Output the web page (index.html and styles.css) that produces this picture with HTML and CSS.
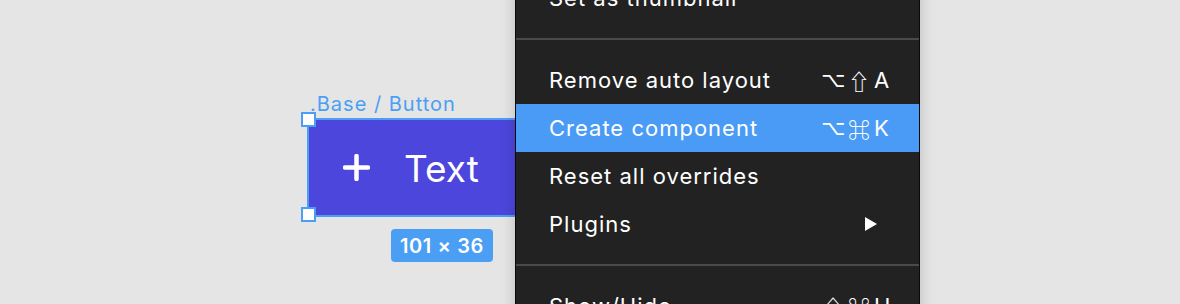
FILE: index.html
```html
<!DOCTYPE html>
<html>
<head>
<meta charset="utf-8">
<link rel="stylesheet" href="styles.css">
</head>
<body>
<div class="canvas">
  <div class="frame-label">.Base / Button</div>
  <div class="button">
    <svg class="plus" width="27" height="27" viewBox="0 0 27 27"><path d="M13.5 2v23M2 13.5h23" stroke="#fff" stroke-width="4.5" stroke-linecap="round"/></svg>
    <span class="btn-text">Text</span>
    <svg class="chev" width="16" height="10" viewBox="0 0 16 10"><path d="M2 2l6 6 6-6" stroke="#fff" stroke-width="2.5" fill="none" stroke-linecap="round"/></svg>
  </div>
  <span class="handle handle-tl"></span>
  <span class="handle handle-bl"></span>
  <div class="size-badge">101 × 36</div>

  <div class="menu">
    <div class="item">Set as thumbnail</div>
    <div class="sep"></div>
    <div class="item"><span>Remove auto layout</span><span class="keys"><span class="k1">⌥</span><span class="k2">⇧</span><span class="kl">A</span></span></div>
    <div class="item active"><span>Create component</span><span class="keys"><span class="k1">⌥</span><span class="k2">⌘</span><span class="kl">K</span></span></div>
    <div class="item"><span>Reset all overrides</span></div>
    <div class="item"><span>Plugins</span><svg class="tri" width="12" height="14" viewBox="0 0 12 14"><path d="M0 0L12 7L0 14Z" fill="#fff"/></svg></div>
    <div class="sep"></div>
    <div class="item"><span>Show/Hide</span><span class="keys"><span class="k2">⇧</span><span class="k2">⌘</span><span class="kl">H</span></span></div>
  </div>
</div>
</body>
</html>
```
FILE: styles.css
```css
html, body {
  margin: 0;
  padding: 0;
  background: #e5e5e5;
  font-family: Inter, "Noto Sans", "DejaVu Sans", sans-serif;
}
.canvas {
  position: relative;
  width: 1180px;
  height: 304px;
  overflow: hidden;
}
.frame-label {
  position: absolute;
  left: 310px;
  top: 94px;
  font-size: 20px;
  line-height: 20px;
  letter-spacing: 1px;
  color: #4a9ff5;
}
.button {
  position: absolute;
  left: 307px;
  top: 118px;
  width: 240px;
  height: 99px;
  box-sizing: border-box;
  border: 2px solid #4a9ff5;
  background: #4d46dc;
  display: flex;
  align-items: center;
  padding-left: 34px;
  gap: 34px;
}
.plus { flex: none; }
.btn-text {
  color: #fff;
  font-size: 37px;
  margin-right: 35px;
  margin-top: 1px;
}
.chev { flex: none; margin-top: -6px; }
.handle {
  position: absolute;
  left: 301px;
  width: 15px;
  height: 15px;
  box-sizing: border-box;
  background: #fff;
  border: 2px solid #4a9ff5;
}
.handle-tl { top: 112px; }
.handle-bl { top: 207px; }
.size-badge {
  position: absolute;
  left: 391px;
  top: 229px;
  width: 102px;
  height: 33px;
  border-radius: 4px;
  background: #4a9ff5;
  color: #fff;
  font-size: 20px;
  font-weight: 600;
  letter-spacing: 0.6px;
  display: flex;
  align-items: center;
  justify-content: center;
}
.menu {
  position: absolute;
  left: 515px;
  top: -27px;
  width: 403px;
  background: #222222;
  border: 1px solid #0a0a0a;
  box-shadow: 0 0 14px rgba(0, 0, 0, 0.18);
  color: #ffffff;
}
.item {
  height: 48px;
  display: flex;
  align-items: center;
  justify-content: space-between;
  padding: 0 31px 0 33px;
  font-size: 22px;
  letter-spacing: 1px;
}
.item.active { background: #4a9bf5; }
.sep {
  height: 2px;
  background: #4a4a4a;
  margin: 16px 0;
}
.keys {
  display: flex;
  align-items: center;
  gap: 5px;
  letter-spacing: 0;
  color: #ffffff;
}
.k1 {
  font-family: "DejaVu Sans", sans-serif;
  font-size: 21px;
  width: 22px;
  text-align: center;
}
.k2 {
  font-family: "Noto Sans CJK JP", "DejaVu Sans", sans-serif;
  font-size: 22px;
  font-weight: 500;
  width: 21px;
  text-align: center;
}
.kl {
  font-family: Inter, sans-serif;
  font-size: 22px;
  width: 14px;
  text-align: right;
}
.tri { margin-right: 11px; }
```
